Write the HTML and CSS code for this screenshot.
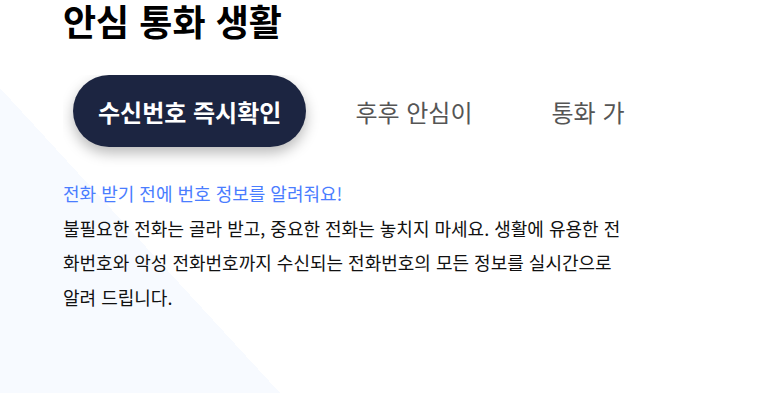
FILE: index.html
```html
<!DOCTYPE html>
<html lang="ko">
  <head>
    <meta charset="UTF-8" />
    <meta name="viewport" content="width=device-width, initial-scale=1.0" />
    <title>안심 통화 생활</title>
    <link rel="stylesheet" href="styles.css">
  </head>
  <body>
    <div class="page">
      <div class="section">
        <h2 class="section-title">안심 통화 생활</h2>

        <div class="tabs">
          <button class="tab tab-active">수신번호 즉시확인</button>
          <button class="tab">후후 안심이</button>
          <button class="tab">통화 가능 시간</button>
        </div>

        <div class="tab-body">
          <p class="tab-lead">전화 받기 전에 번호 정보를 알려줘요!</p>
          <p class="tab-text">
            불필요한 전화는 골라 받고, 중요한 전화는 놓치지 마세요. 생활에 유용한 전화번호와 악성 전화번호까지 수신되는 전화번호의 모든 정보를 실시간으로 알려 드립니다.
          </p>
        </div>
      </div>
    </div>
  </body>
</html>
```

FILE: styles.css
```css
* {
  margin: 0;
  padding: 0;
  box-sizing: border-box;
}

body {
  font-family: "Noto Sans CJK KR", "Noto Sans", sans-serif;
  color: #111;
  background-color: #fff;
  overflow: hidden;
}

.page {
  min-height: 393px;
  background-image: linear-gradient(to top right, #f7faff 50%, transparent 50%);
  background-size: 280px 305px;
  background-position: 0 88px;
  background-repeat: no-repeat;
}

.section {
  width: 625px;
  padding-left: 63px;
}

.section-title {
  font-size: 36px;
  font-weight: 700;
  line-height: 40px;
  color: #000;
}

/* tabs - the list is cut at the section edge */
.tabs {
  display: flex;
  gap: 19px;
  margin-top: 35px;
  overflow: hidden;
  padding: 0 0 20px 10px;
  margin-bottom: -20px;
}

.tab {
  flex-shrink: 0;
  height: 72px;
  padding: 0 30px;
  border: none;
  border-radius: 36px;
  background-color: transparent;
  font-family: inherit;
  font-size: 24px;
  font-weight: 400;
  color: #555;
  white-space: nowrap;
}

.tab-active {
  padding: 0 25px;
  background-color: #1c2541;
  color: #fff;
  font-weight: 700;
  box-shadow: 0 6px 14px rgba(0, 0, 0, 0.28);
}

.tab-body {
  margin-top: 29px;
  font-size: 18px;
  line-height: 34.5px;
}

.tab-lead {
  color: #4a7dff;
}

.tab-text {
  color: #111;
}
```
